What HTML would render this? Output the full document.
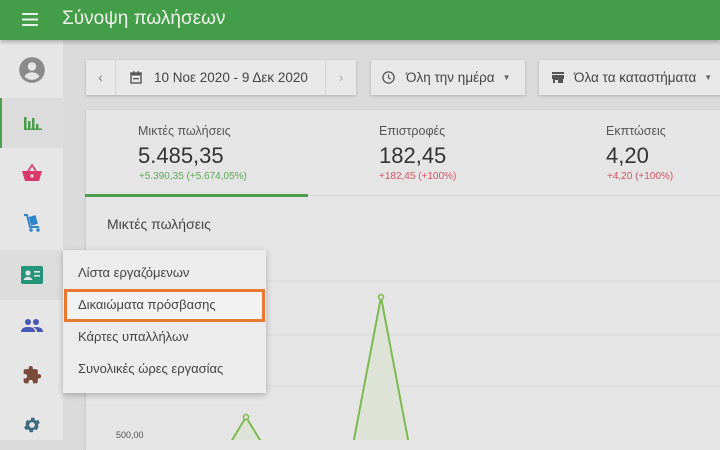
<!DOCTYPE html>
<html><head><meta charset="utf-8"><style>
*{margin:0;padding:0;box-sizing:border-box}
body{width:720px;height:440px;overflow:hidden;background:#dadada;font-family:"Liberation Sans","DejaVu Sans",sans-serif;position:relative;color:#333}
.hdr{position:absolute;left:0;top:0;width:720px;height:40px;background:#449d48;box-shadow:0 2px 4px rgba(0,0,0,.25);z-index:3}
.hdr .t{position:absolute;left:62px;top:8px;color:#f0f6ee;font-size:19px}
.side{position:absolute;left:0;top:40px;width:63px;height:400px;background:#e6e6e6}
.si{position:absolute;left:0;width:63px;height:50px;display:flex;align-items:center;justify-content:center}
.main{position:absolute;left:63px;top:40px;width:657px;height:400px;background:#dbdbdb}
.btn{position:absolute;top:60px;height:35px;background:#e8e8e8;box-shadow:0 1px 3px rgba(0,0,0,.2);font-size:13.5px;color:#444;display:flex;align-items:center}
.card{position:absolute;left:86px;top:110px;width:640px;height:340px;background:#e5e5e5;box-shadow:0 1px 3px rgba(0,0,0,.15)}
.lab{position:absolute;font-size:12.5px;color:#555}
.val{position:absolute;font-size:22px;color:#333}
.d{position:absolute;font-size:10px}
.menu{position:absolute;left:63px;top:250px;width:203px;height:143px;background:#ececec;box-shadow:0 2px 6px rgba(0,0,0,.25);z-index:4}
.mi{position:absolute;left:15px;font-size:13px;color:#444}
</style></head><body>
<div class="hdr">
<svg style="position:absolute;left:22px;top:13px" width="16" height="13"><rect y="0" width="16" height="2" fill="#e8f2e6"/><rect y="5.5" width="16" height="2" fill="#e8f2e6"/><rect y="11" width="16" height="2" fill="#e8f2e6"/></svg>
<div class="t">Σύνοψη πωλήσεων</div></div>
<div class="side">
<div class="si" style="top:5px"><svg width="28" height="28" viewBox="0 0 24 24"><circle cx="12" cy="12" r="11" fill="#8a8a8a"/><circle cx="12" cy="9" r="3.6" fill="#e6e6e6"/><path d="M5.5 17.5c1.5-2.5 4-3.5 6.5-3.5s5 1 6.5 3.5c-1.6 1.8-3.9 3-6.5 3s-4.9-1.2-6.5-3z" fill="#e6e6e6"/></svg></div>
<div class="si" style="top:58px;background:#dcdcdc;border-left:2px solid #4a9e4c"><svg width="20" height="16"><rect x="1" y="2" width="2.5" height="13" fill="#4a9e4c"/><rect x="5" y="6" width="2.5" height="9" fill="#4a9e4c"/><rect x="9" y="3" width="2.5" height="12" fill="#4a9e4c"/><rect x="13" y="9" width="2.5" height="6" fill="#4a9e4c"/><rect x="1" y="13.5" width="18" height="1.5" fill="#4a9e4c"/></svg></div>
<div class="si" style="top:108px"><svg width="22" height="18" viewBox="0 0 22 18"><path d="M7 7l4-6 4 6" stroke="#d93a6a" stroke-width="1.6" fill="none"/><path d="M1 7h20l-3 10H4z" fill="#d93a6a"/><circle cx="11" cy="12" r="1.6" fill="#e6e6e6"/></svg></div>
<div class="si" style="top:158px"><svg width="20" height="20" viewBox="0 0 20 20"><path d="M2 2h3l3 12h9" stroke="#2f86c9" stroke-width="2" fill="none"/><rect x="8" y="3" width="7" height="9" fill="#2f86c9" transform="rotate(-15 11 8)"/><circle cx="9" cy="17" r="1.8" fill="#2f86c9"/><circle cx="16" cy="17" r="1.8" fill="#2f86c9"/></svg></div>
<div class="si" style="top:210px;background:#dddddd"><svg width="22" height="18"><rect width="22" height="18" rx="2" fill="#23957a"/><circle cx="7" cy="7" r="2.6" fill="#e6e6e6"/><path d="M2.5 14c1-2.5 2.5-3 4.5-3s3.5.5 4.5 3z" fill="#e6e6e6"/><rect x="13" y="5" width="6" height="1.6" fill="#e6e6e6"/><rect x="13" y="9" width="6" height="1.6" fill="#e6e6e6"/></svg></div>
<div class="si" style="top:260px"><svg width="22" height="14" viewBox="0 0 22 14"><circle cx="7" cy="4" r="3" fill="#4757b4"/><circle cx="15" cy="4" r="3" fill="#4757b4"/><path d="M0 14c0-4 3.5-5 7-5s7 1 7 5z" fill="#4757b4"/><path d="M12 9.3c1-.2 2-.3 3-.3 3.5 0 7 1 7 5h-6c0-2-1-3.5-4-4.7z" fill="#4757b4"/></svg></div>
<div class="si" style="top:310px"><svg width="20" height="20" viewBox="0 0 24 24"><path d="M20.5 11H19V7c0-1.1-.9-2-2-2h-4V3.5a2.5 2.5 0 0 0-5 0V5H4c-1.1 0-2 .9-2 2v3.8h1.5c1.5 0 2.7 1.2 2.7 2.7S5 16.2 3.5 16.2H2V20c0 1.1.9 2 2 2h3.8v-1.5c0-1.5 1.2-2.7 2.7-2.7s2.7 1.2 2.7 2.7V22H17c1.1 0 2-.9 2-2v-4h1.5a2.5 2.5 0 0 0 0-5z" fill="#7a4a3a"/></svg></div>
<div class="si" style="top:360px"><svg width="20" height="20" viewBox="0 0 24 24"><path d="M19.4 13c.04-.3.06-.6.06-1s-.02-.7-.06-1l2.1-1.6-2-3.5-2.5 1a7 7 0 0 0-1.7-1l-.4-2.6h-4l-.4 2.6a7 7 0 0 0-1.7 1l-2.5-1-2 3.5L4.6 11c-.04.3-.06.6-.06 1s.02.7.06 1l-2.1 1.6 2 3.5 2.5-1a7 7 0 0 0 1.7 1l.4 2.6h4l.4-2.6a7 7 0 0 0 1.7-1l2.5 1 2-3.5zM12 15.5a3.5 3.5 0 1 1 0-7 3.5 3.5 0 0 1 0 7z" fill="#3d6a7e"/></svg></div>
</div>
<div class="main"></div>
<div class="btn" style="left:86px;width:270px">
<div style="width:30px;text-align:center;color:#777;border-right:1px solid #d4d4d4;height:35px;line-height:35px">‹</div>
<svg style="margin-left:14px" width="12" height="13"><rect x="1" y="2" width="10" height="10" fill="none" stroke="#555" stroke-width="1.4"/><rect x="1" y="2" width="10" height="2.5" fill="#555"/><rect x="3" y="7" width="6" height="1.3" fill="#555"/><rect x="3" y="0" width="1.3" height="3" fill="#555"/><rect x="7.7" y="0" width="1.3" height="3" fill="#555"/></svg>
<span style="margin-left:12px">10 Νοε 2020 - 9 Δεκ 2020</span>
<div style="position:absolute;right:0;width:31px;text-align:center;color:#aaa;border-left:1px solid #d4d4d4;height:35px;line-height:35px">›</div></div>
<div class="btn" style="left:371px;width:154px"><svg style="margin-left:11px" width="13" height="13"><circle cx="6.5" cy="6.5" r="5.6" fill="none" stroke="#555" stroke-width="1.3"/><path d="M6.5 3.5v3.3l2.2 1.4" stroke="#555" stroke-width="1.2" fill="none"/></svg><span style="margin-left:11px">Όλη την ημέρα</span><span style="margin-left:8px;font-size:8px;color:#666">▼</span></div>
<div class="btn" style="left:539px;width:190px"><svg style="margin-left:13px" width="12" height="11"><rect x="0" y="0" width="12" height="2" fill="#555"/><rect x="0" y="3" width="12" height="4" fill="#555"/><rect x="1" y="7" width="10" height="4" fill="#555"/><rect x="3" y="8" width="3" height="3" fill="#e8e8e8"/></svg><span style="margin-left:10px">Όλα τα καταστήματα</span><span style="margin-left:8px;font-size:8px;color:#666">▼</span></div>
<div class="card">
<div class="lab" style="left:52px;top:14px">Μικτές πωλήσεις</div>
<div class="val" style="left:52px;top:33px">5.485,35</div>
<div class="d" style="left:53px;top:61px;color:#5caa55">+5.390,35 (+5.674,05%)</div>
<div class="lab" style="left:293px;top:14px">Επιστροφές</div>
<div class="val" style="left:293px;top:33px">182,45</div>
<div class="d" style="left:293px;top:61px;color:#d9535e">+182,45 (+100%)</div>
<div class="lab" style="left:520px;top:14px">Εκπτώσεις</div>
<div class="val" style="left:520px;top:33px">4,20</div>
<div class="d" style="left:521px;top:61px;color:#d9535e">+4,20 (+100%)</div>
<div style="position:absolute;left:0;top:85px;width:640px;height:1px;background:#d6d6d6"></div>
<div style="position:absolute;left:-1px;top:84px;width:223px;height:3px;background:#4a9e4c"></div>
<div style="position:absolute;left:21px;top:106px;font-size:14px;color:#444">Μικτές πωλήσεις</div>
<div style="position:absolute;left:30px;top:320px;font-size:9px;color:#555">500,00</div>
</div>
<svg style="position:absolute;left:0;top:0" width="720" height="440">
<line x1="90" y1="281" x2="720" y2="281" stroke="#d8d8d8"/><line x1="90" y1="335" x2="720" y2="335" stroke="#d8d8d8"/><line x1="90" y1="386" x2="720" y2="386" stroke="#d8d8d8"/>
<path d="M226 450L246 417L266 450Z" fill="#dde3d7"/><path d="M226 450L246 417L266 450" stroke="#7cba50" stroke-width="2" fill="none"/><circle cx="246" cy="417" r="2.5" fill="#e5e5e5" stroke="#7cba50" stroke-width="1.5"/>
<path d="M352 450L381 297L410 450Z" fill="#dde3d7"/><path d="M352 450L381 297L410 450" stroke="#7cba50" stroke-width="2" fill="none"/><circle cx="381" cy="297" r="2.5" fill="#e5e5e5" stroke="#7cba50" stroke-width="1.5"/>
</svg>
<div class="menu">
<div class="mi" style="top:15px">Λίστα εργαζόμενων</div>
<div style="position:absolute;left:1px;top:39px;width:201px;height:33px;background:#f2f2f2;border:3px solid #e8782f"></div>
<div class="mi" style="top:47px">Δικαιώματα πρόσβασης</div>
<div class="mi" style="top:79px">Κάρτες υπαλλήλων</div>
<div class="mi" style="top:111px">Συνολικές ώρες εργασίας</div>
</div>
</body></html>
